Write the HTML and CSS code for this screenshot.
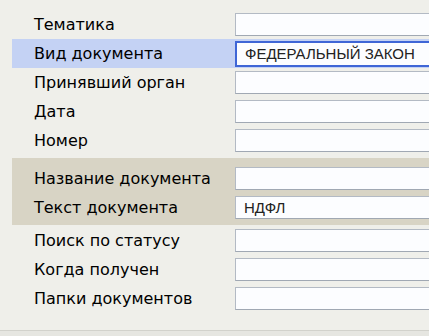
FILE: index.html
```html
<!DOCTYPE html>
<html lang="ru">
<head>
<meta charset="utf-8">
<link rel="stylesheet" href="styles.css">
</head>
<body>
<div class="panel">
  <div class="group">
    <div class="row"><span class="label">Тематика</span><div class="field"></div></div>
    <div class="row row-active"><span class="label">Вид документа</span><div class="field field-active">ФЕДЕРАЛЬНЫЙ ЗАКОН</div></div>
    <div class="row"><span class="label">Принявший орган</span><div class="field"></div></div>
    <div class="row"><span class="label">Дата</span><div class="field"></div></div>
    <div class="row"><span class="label">Номер</span><div class="field"></div></div>
  </div>
  <div class="group group-tan">
    <div class="row"><span class="label">Название документа</span><div class="field"></div></div>
    <div class="row"><span class="label">Текст документа</span><div class="field">НДФЛ</div></div>
  </div>
  <div class="group group-last">
    <div class="row"><span class="label">Поиск по статусу</span><div class="field"></div></div>
    <div class="row"><span class="label">Когда получен</span><div class="field"></div></div>
    <div class="row"><span class="label">Папки документов</span><div class="field"></div></div>
  </div>
</div>
<div class="footer"></div>
</body>
</html>
```
FILE: styles.css
```css
html, body {
  margin: 0;
  padding: 0;
  background: #efefea;
  overflow: hidden;
  width: 429px;
  height: 336px;
}
.panel {
  padding: 10px 0 0 12px;
  height: 331px;
  box-sizing: border-box;
  border-bottom: 1px solid #d2d2cc;
}
.group {
  display: flex;
  flex-direction: column;
}
.group-tan {
  background: #d8d4c5;
  margin-top: 3px;
  padding: 6px 0 3px;
}
.group-last {
  margin-top: 1px;
}
.row {
  display: grid;
  grid-template-columns: 223px 1fr;
  align-items: center;
  height: 29px;
}
.row-active {
  background: #c4d2f4;
}
.label {
  padding-left: 22px;
  font-family: "DejaVu Sans", sans-serif;
  font-size: 16px;
  color: #000;
  white-space: nowrap;
}
.field {
  height: 23px;
  box-sizing: border-box;
  background: #fcfdff;
  border: 1px solid #b3bac4;
  border-right: none;
  border-bottom-color: #a0a8b3;
  font-family: "Liberation Sans", sans-serif;
  font-size: 15px;
  line-height: 21px;
  padding-left: 8px;
  color: #222;
  white-space: nowrap;
  overflow: hidden;
}
.field-active {
  height: 26px;
  border: 2px solid #3f66d6;
  border-right: none;
  line-height: 22px;
}
.footer {
  height: 5px;
  background: #e6e6e1;
}
```
